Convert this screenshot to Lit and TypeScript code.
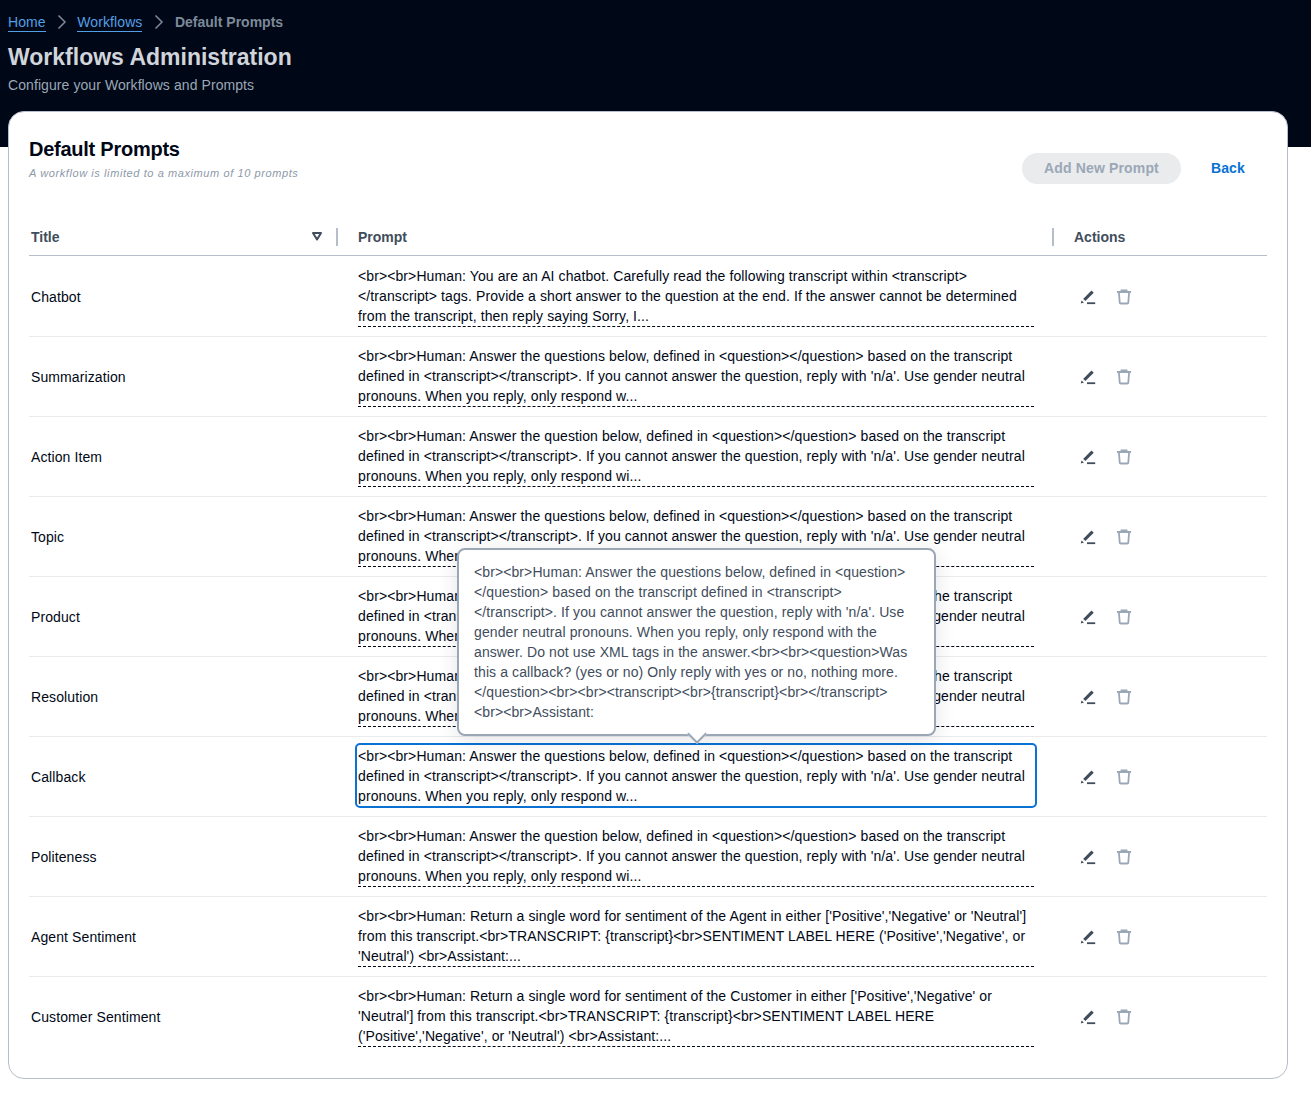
import { LitElement, css, html } from "lit";
import { customElement } from "lit/decorators.js";

const Q_S = "<br><br>Human: Answer the questions below, defined in <question></question> based on the transcript\ndefined in <transcript></transcript>. If you cannot answer the question, reply with 'n/a'. Use gender neutral\n";
const Q_1 = "<br><br>Human: Answer the question below, defined in <question></question> based on the transcript\ndefined in <transcript></transcript>. If you cannot answer the question, reply with 'n/a'. Use gender neutral\n";

const rows = [
  { title: "Chatbot", prompt: "<br><br>Human: You are an AI chatbot. Carefully read the following transcript within <transcript>\n</transcript> tags. Provide a short answer to the question at the end. If the answer cannot be determined\nfrom the transcript, then reply saying Sorry, I..." },
  { title: "Summarization", prompt: Q_S + "pronouns. When you reply, only respond w..." },
  { title: "Action Item", prompt: Q_1 + "pronouns. When you reply, only respond wi..." },
  { title: "Topic", prompt: Q_S + "pronouns. When you reply, only respond w..." },
  { title: "Product", prompt: Q_S + "pronouns. When you reply, only respond w..." },
  { title: "Resolution", prompt: Q_S + "pronouns. When you reply, only respond w..." },
  { title: "Callback", prompt: Q_S + "pronouns. When you reply, only respond w...", focused: true },
  { title: "Politeness", prompt: Q_1 + "pronouns. When you reply, only respond wi..." },
  { title: "Agent Sentiment", prompt: "<br><br>Human: Return a single word for sentiment of the Agent in either ['Positive','Negative' or 'Neutral']\nfrom this transcript.<br>TRANSCRIPT: {transcript}<br>SENTIMENT LABEL HERE ('Positive','Negative', or\n'Neutral') <br>Assistant:..." },
  { title: "Customer Sentiment", prompt: "<br><br>Human: Return a single word for sentiment of the Customer in either ['Positive','Negative' or\n'Neutral'] from this transcript.<br>TRANSCRIPT: {transcript}<br>SENTIMENT LABEL HERE\n('Positive','Negative', or 'Neutral') <br>Assistant:..." },
];

const TOOLTIP = "<br><br>Human: Answer the questions below, defined in <question>\n</question> based on the transcript defined in <transcript>\n</transcript>. If you cannot answer the question, reply with 'n/a'. Use\ngender neutral pronouns. When you reply, only respond with the\nanswer. Do not use XML tags in the answer.<br><br><question>Was\nthis a callback? (yes or no) Only reply with yes or no, nothing more.\n</question><br><br><transcript><br>{transcript}<br></transcript>\n<br><br>Assistant:";

const chevron = html`<svg class="chevron" width="16" height="16" viewBox="0 0 16 16" fill="none"><path d="M4.5 1.5 11 8l-6.5 6.5" stroke="currentColor" stroke-width="1.5"/></svg>`;

@customElement("app-root")
export class AppRoot extends LitElement {
  static styles = css`
    :host {
      display: block;
      min-height: 1094px;
      background: #fff;
      font-family: "Liberation Sans", Arial, sans-serif;
      font-size: 14px;
      line-height: 20px;
      letter-spacing: 0.1px;
      color: #000716;
    }

    .top {
      height: 147px;
      box-sizing: border-box;
      padding: 12px 8px 0;
      background: #000716;
    }

    .crumbs {
      display: flex;
      align-items: center;
      height: 20px;
    }

    .crumbs a {
      color: #539fe5;
      border-bottom: 1px solid #539fe5;
      line-height: 18px;
    }

    .crumbs .chevron {
      margin: 0 7px 0 8.5px;
      color: #7d8a9a;
    }

    .crumbs strong {
      margin-left: 1px;
      color: #7d8a9a;
      font-weight: 700;
      letter-spacing: 0;
    }

    h1 {
      margin: 9px 0 0;
      font-size: 23px;
      line-height: 32px;
      font-weight: 700;
      letter-spacing: 0;
      color: #d1d5db;
    }

    .sub {
      margin-top: 2px;
      letter-spacing: 0.08px;
      color: #9ba7b6;
    }

    .card {
      position: relative;
      margin: -36px 23px 0 8px;
      height: 968px;
      box-sizing: border-box;
      padding: 24px 20px 0;
      background: #fff;
      border: 1px solid #b6bec9;
      border-radius: 16px;
    }

    .card-head {
      display: flex;
      justify-content: space-between;
      height: 92px;
    }

    h2 {
      margin: 0 0 3px;
      font-size: 20px;
      line-height: 26px;
      font-weight: 700;
      letter-spacing: -0.25px;
    }

    .note {
      margin-top: 1px;
      font-size: 11px;
      line-height: 16px;
      font-style: italic;
      letter-spacing: 0.59px;
      color: #8d99a8;
    }

    .btns {
      display: flex;
      align-items: flex-start;
      gap: 30px;
      margin: 17px 22px 0 0;
      letter-spacing: 0.15px;
    }

    .add {
      height: 31px;
      box-sizing: border-box;
      padding: 5px 22px;
      border-radius: 16px;
      background: #e9ebed;
      color: #9ba7b6;
      font-weight: 700;
    }

    .back {
      padding-top: 5px;
      color: #0972d3;
      font-weight: 700;
    }

    .grid {
      display: grid;
      grid-template-columns: 308px 716px 214px;
    }

    .thead {
      height: 28px;
      margin-bottom: 1px;
      box-sizing: border-box;
      border-bottom: 1px solid #b6bec9;
      font-weight: 700;
      letter-spacing: 0;
      color: #414d5c;
    }

    .th {
      display: flex;
      align-items: flex-start;
      justify-content: space-between;
      height: 18px;
      line-height: 18px;
      padding-left: 21px;
    }

    .th.first,
    .th.second {
      border-right: 2px solid #b6bec9;
      box-sizing: border-box;
    }

    .th.first {
      width: 309px;
      padding: 0 14px 0 2px;
    }

    .th.second {
      width: 718px;
      margin-left: -1px;
      padding-left: 22px;
    }

    .sort {
      margin-top: 4px;
    }

    .row {
      height: 80px;
      box-sizing: border-box;
      align-items: center;
      border-bottom: 1px solid #e9ebed;
    }

    .row:last-child {
      border-bottom-color: transparent;
    }

    .title {
      padding-left: 2px;
    }

    .cell {
      padding-left: 21px;
    }

    .prompt {
      position: relative;
      width: 676px;
      white-space: pre-line;
      border-bottom: 1px dashed #000716;
    }

    .focus {
      position: absolute;
      inset: -3px -3px -2px -3px;
      border: 2px solid #0972d3;
      border-radius: 5px;
    }

    .tip {
      position: absolute;
      left: 99px;
      bottom: 70px;
      z-index: 2;
      width: 479px;
      height: 188px;
      box-sizing: border-box;
      padding: 12px 15px;
      background: #fff;
      border: 2px solid #9ba7b6;
      border-radius: 8px;
      box-shadow: 0 4px 20px 1px rgba(0, 7, 22, 0.1);
      color: #414d5c;
      white-space: pre-line;
    }

    .tip::after {
      content: "";
      position: absolute;
      left: 231px;
      bottom: -7px;
      width: 14px;
      height: 14px;
      box-sizing: border-box;
      background: #fff;
      border: solid #9ba7b6;
      border-width: 0 2px 2px 0;
      transform: rotate(45deg);
    }

    .actions {
      display: flex;
      align-items: center;
      gap: 20px;
      padding-left: 27px;
    }

    .actions svg {
      display: block;
    }
  `;

  render() {
    return html`
      <div class="top">
        <nav class="crumbs">
          <a>Home</a>${chevron}<a>Workflows</a>${chevron}<strong>Default Prompts</strong>
        </nav>
        <h1>Workflows Administration</h1>
        <div class="sub">Configure your Workflows and Prompts</div>
      </div>
      <section class="card">
        <div class="card-head">
          <div>
            <h2>Default Prompts</h2>
            <div class="note">A workflow is limited to a maximum of 10 prompts</div>
          </div>
          <div class="btns">
            <div class="add">Add New Prompt</div>
            <div class="back">Back</div>
          </div>
        </div>
        <div class="grid thead">
          <div class="th first">
            Title
            <svg class="sort" width="10" height="9" viewBox="0 0 10 9" fill="none"><path d="M1 1h8L5 7.5z" stroke="#414d5c" stroke-width="2" stroke-linejoin="round"/></svg>
          </div>
          <div class="th second">Prompt</div>
          <div class="th">Actions</div>
        </div>
        ${rows.map((r) => this.renderRow(r))}
      </section>
    `;
  }

  renderRow(r: { title: string; prompt: string; focused?: boolean }) {
    const overlay = r.focused ? html`<div class="focus"></div><div class="tip">${TOOLTIP}</div>` : "";
    return html`
      <div class="grid row">
        <div class="title">${r.title}</div>
        <div class="cell">
          <div class="prompt">${r.prompt}${overlay}</div>
        </div>
        <div class="actions">
          <svg width="16" height="16" viewBox="0 0 16 16" fill="none">
            <path d="M.8 14.4 1.6 11.4 3.9 13.6z" fill="#414d5c"/>
            <path d="M4.3 11 12.6 2.6" stroke="#414d5c" stroke-width="3.2"/>
            <path d="M7 14.2h8.2" stroke="#414d5c" stroke-width="1.8"/>
          </svg>
          <svg width="16" height="16" viewBox="0 0 16 16" fill="none" stroke="#9ba7b6" stroke-width="1.8">
            <path d="M1 3h14M5.5 3V1.5h5V3M2.9 3l.8 10.6a1 1 0 0 0 1 .9h6.6a1 1 0 0 0 1-.9L13.1 3"/>
          </svg>
        </div>
      </div>
    `;
  }
}
